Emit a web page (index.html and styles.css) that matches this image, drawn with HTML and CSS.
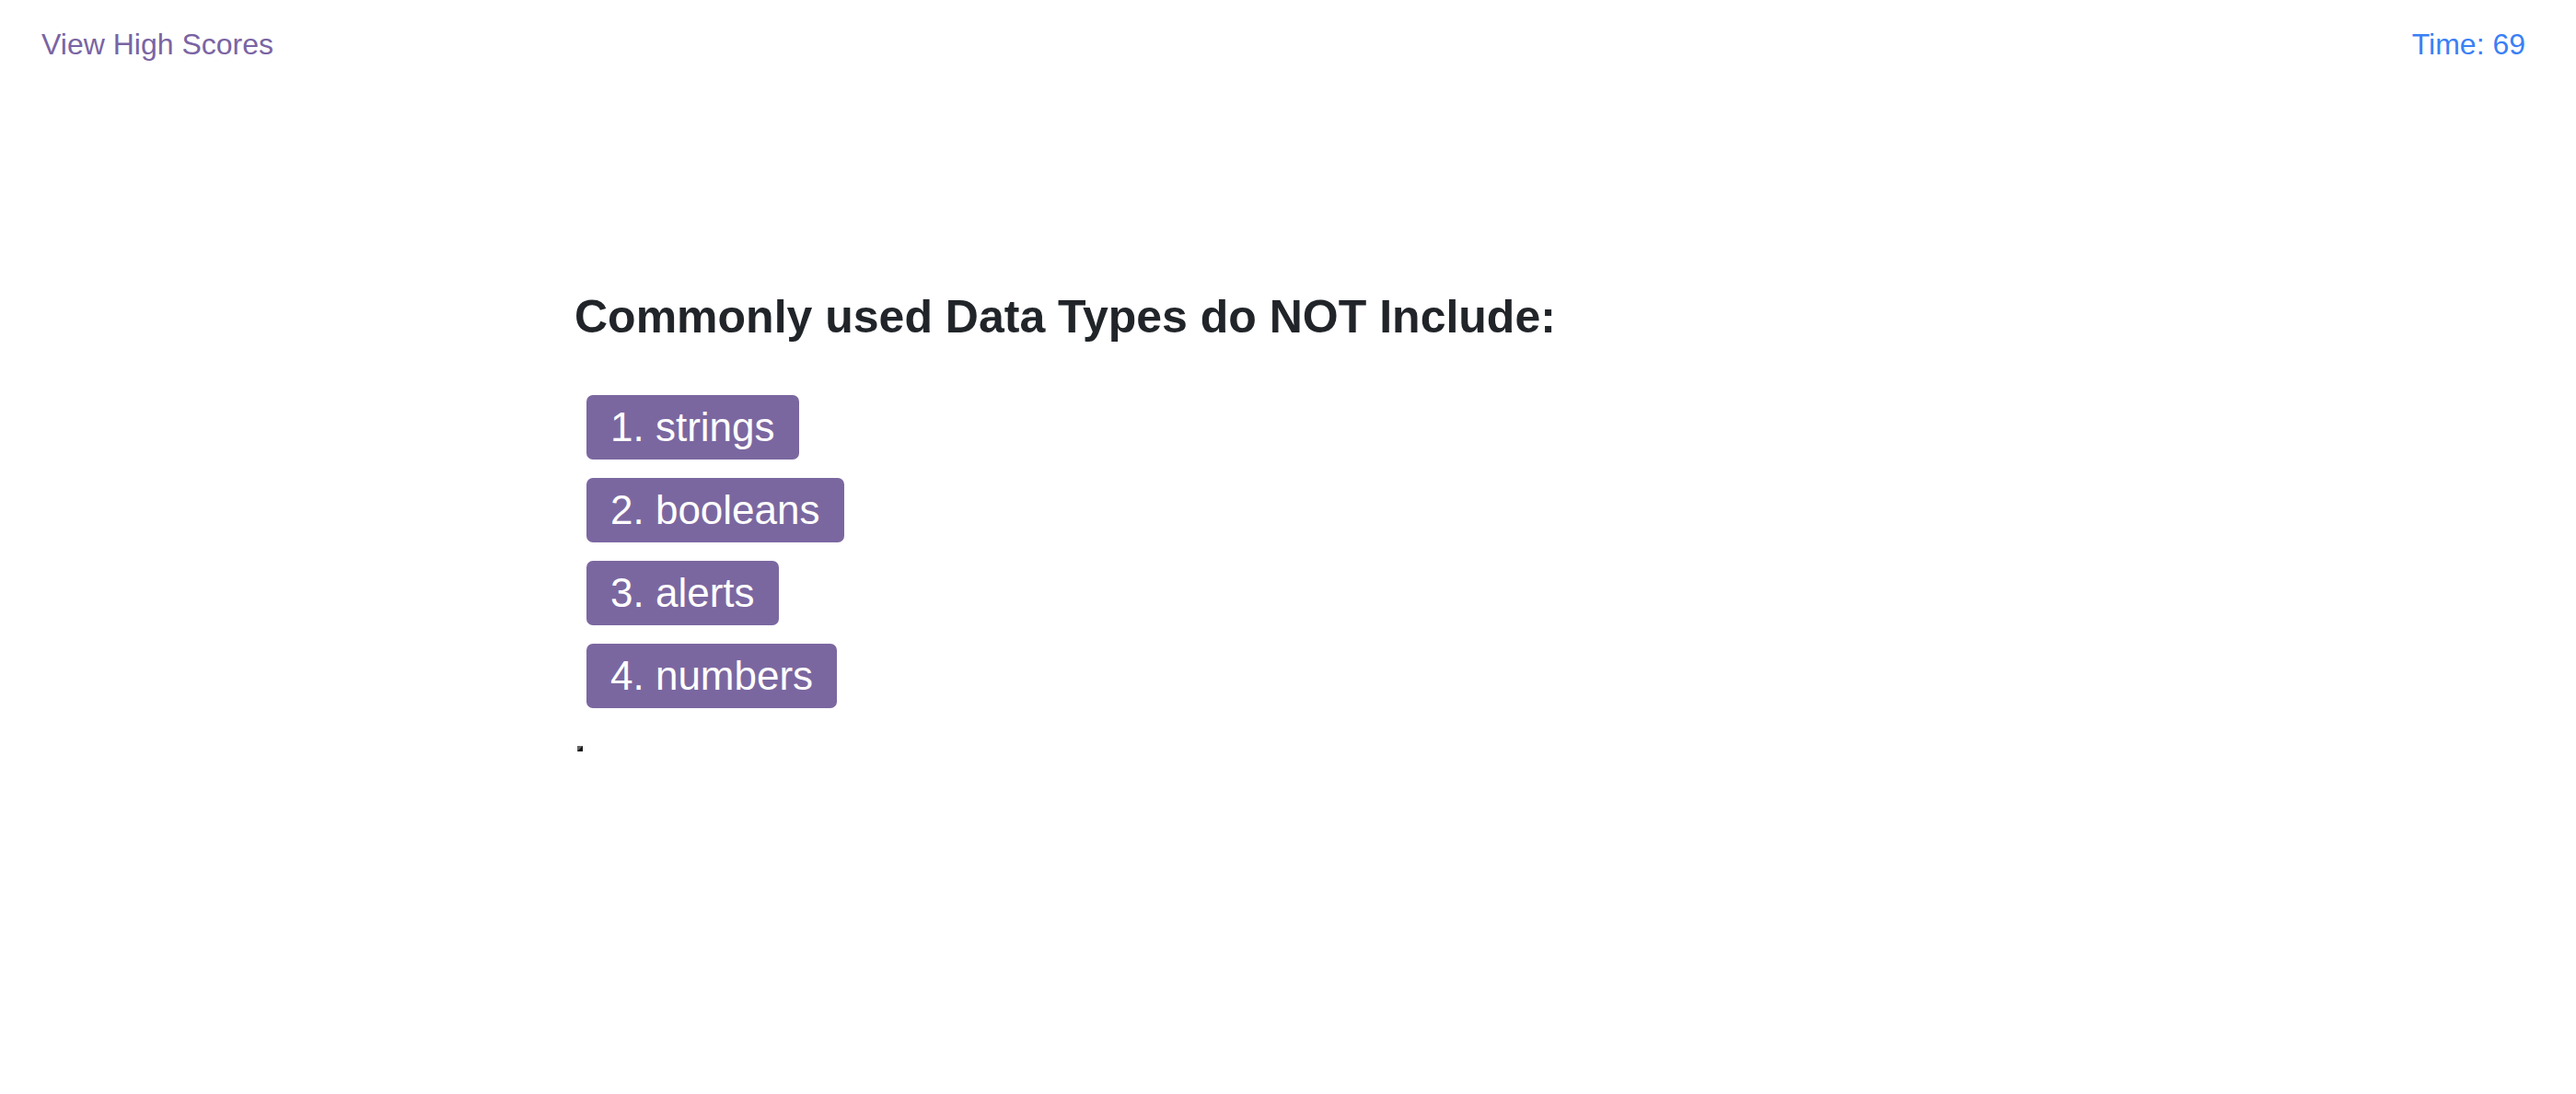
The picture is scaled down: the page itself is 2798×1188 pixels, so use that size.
FILE: index.html
```html
<!DOCTYPE html>
<html lang="en">
<head>
<meta charset="utf-8">
<title>Code Quiz</title>
<link rel="stylesheet" href="styles.css">
</head>
<body>
<header class="topbar">
  <a class="scores-link" href="#">View High Scores</a>
  <div class="timer">Time: 69</div>
</header>
<main class="quiz">
  <h2 class="question">Commonly used Data Types do NOT Include:</h2>
  <div class="choices">
    <button class="choice">1. strings</button>
    <button class="choice">2. booleans</button>
    <button class="choice">3. alerts</button>
    <button class="choice">4. numbers</button>
  </div>
  <div class="feedback"></div>
</main>
</body>
</html>
```
FILE: styles.css
```css
html, body {
  margin: 0;
  padding: 0;
  background: #ffffff;
}
body {
  font-family: "Liberation Sans", Arial, Helvetica, sans-serif;
  color: #212529;
  height: 1188px;
  overflow: hidden;
}
.topbar {
  display: flex;
  justify-content: space-between;
  align-items: flex-start;
  padding: 29px 55px 0 45px;
  font-size: 32px;
  line-height: 1.2;
}
.scores-link {
  color: #7a64a3;
  text-decoration: none;
}
.timer {
  color: #3a80f6;
}
.quiz {
  padding-left: 624px;
  padding-top: 247px;
}
.question {
  margin: 0;
  font-size: 50px;
  font-weight: bold;
  line-height: 1.2;
  color: #212529;
}
.choices {
  display: flex;
  flex-direction: column;
  align-items: flex-start;
  gap: 20px;
  margin-top: 55px;
  margin-left: 13px;
}
.choice {
  font-family: "Liberation Sans", Arial, Helvetica, sans-serif;
  font-size: 44px;
  line-height: 1.2;
  color: #ffffff;
  background: #7b67a0;
  border: none;
  border-radius: 7px;
  padding: 8.6px 26px;
  margin: 0;
  cursor: pointer;
}
.feedback {
  width: 0;
  height: 0;
  border-style: solid;
  border-width: 3px;
  border-color: #666666 #111111 #111111 #666666;
  margin-top: 41px;
  margin-left: 3px;
}
```
